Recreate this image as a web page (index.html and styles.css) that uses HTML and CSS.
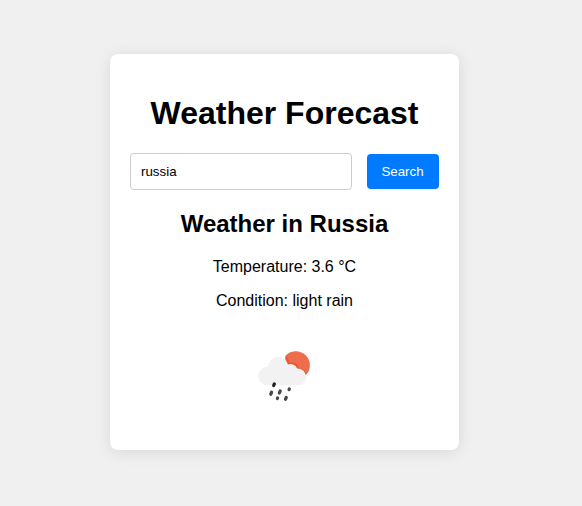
FILE: index.html
```html
<!DOCTYPE html>
<html lang="en">
<head>
<meta charset="utf-8">
<title>Weather Forecast</title>
<link rel="stylesheet" href="styles.css">
</head>
<body>
<main class="container">
<h1>Weather Forecast</h1>
<form class="search"><input class="city" type="text" value="russia" aria-label="City"><button class="submit" type="button">Search</button></form>
<section class="result">
<h2>Weather in Russia</h2>
<p>Temperature: 3.6 °C</p>
<p>Condition: light rain</p>
<svg class="icon" viewBox="0.3 0 100 100" role="img" aria-label="Light rain">
<path d="M50.600 30A14 14 0 1 1 71.700 48.600L66 50 51 42z" fill="#ec6e4c"/>
<path d="M51 31q2.800 3 3 6.700 7.300-1.700 9 4.500 5.600.8 8.200 6" fill="none" stroke="#e9552f" stroke-width="1.500"/>
<path d="M32.800 59.300a9.300 9.300 0 0 1 0-18.600l.7.100a10 10 0 0 1 19.700-2.300 7.200 7.200 0 0 1 9.300 4.100 8.500 8.500 0 0 1 8.900 8.300 8.300 8.300 0 0 1-8.500 8.400z" fill="#f2f2f2"/>
<g stroke="#484848" stroke-width="3.300" stroke-linecap="round"><path d="M39.600 58l-.6 1.500" stroke="#222"/><path d="M36.900 66.200l-.8 2M45.500 65l-.8 2M54.600 63l-.2.600M42.900 72l-.2.500M51.600 71.400l-.8 1.800"/></g>
</svg>
</section>
</main>
</body>
</html>
```
FILE: styles.css
```css
body {
  margin: 0;
  height: 506px;
  background: #f0f0f0;
  font-family: "Liberation Sans", Arial, sans-serif;
  text-align: center;
  overflow: hidden;
}
.container {
  box-sizing: border-box;
  width: 349px;
  height: 396px;
  margin: 54px 0 0 110px;
  padding: 20px;
  background: #fff;
  border-radius: 8px;
  box-shadow: 0 2px 16px rgba(0, 0, 0, 0.1);
  display: flow-root;
}
h1 { margin: 21px 0; font-size: 32px; line-height: 37px; }
.search { display: flex; align-items: center; justify-content: space-between; margin: 0; }
.city {
  box-sizing: border-box;
  width: 222px;
  height: 37px;
  padding: 10px;
  border: 1px solid #ccc;
  border-radius: 4px;
  font: 13.333px "Liberation Sans", Arial, sans-serif;
}
.submit {
  width: 72px;
  height: 35px;
  padding: 0 1px 0 0;
  border: 0;
  border-radius: 4px;
  background: #007bff;
  color: #fff;
  font: 13.333px "Liberation Sans", Arial, sans-serif;
}
h2 { margin: 20px 0; font-size: 24px; line-height: 28px; }
p { margin: 16px 0; font-size: 16px; line-height: 18px; }
.icon { width: 100px; height: 100px; }
```
